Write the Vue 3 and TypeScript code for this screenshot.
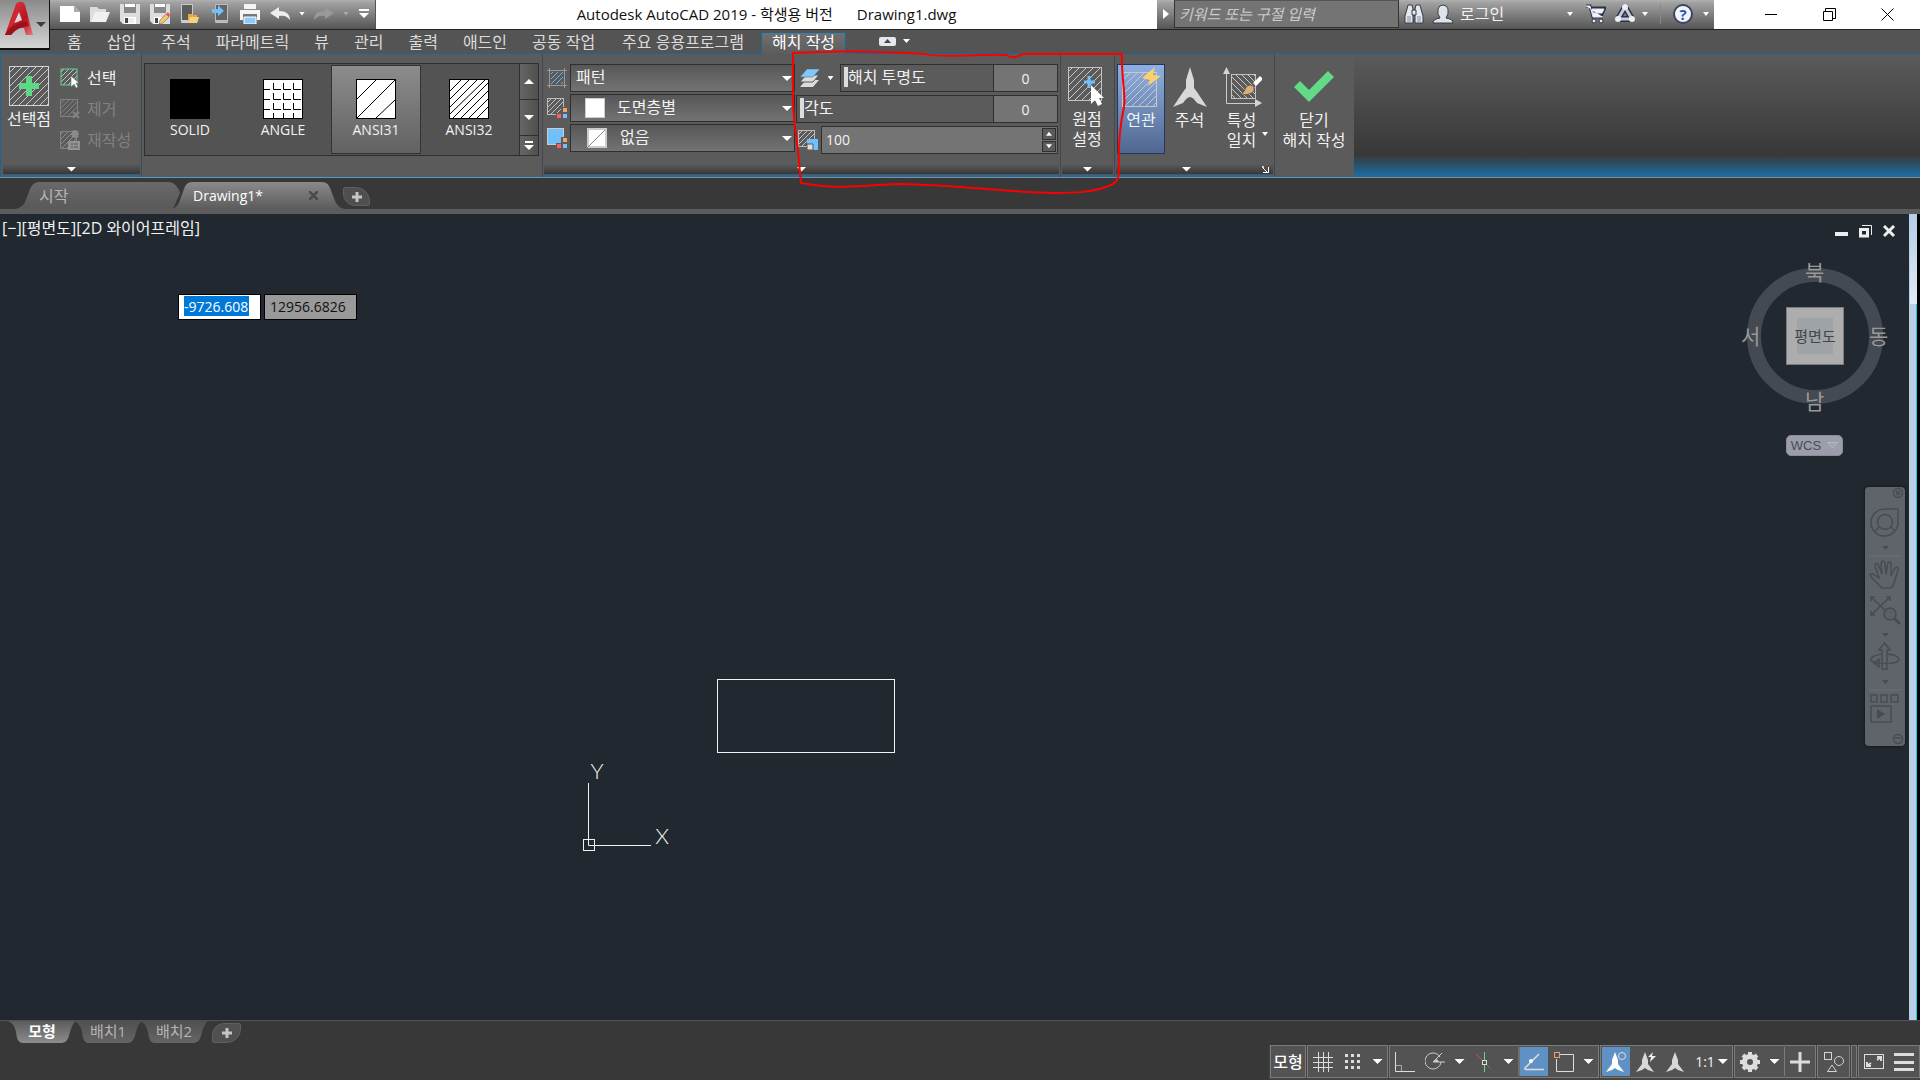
<script setup lang="ts">
import { ref } from 'vue'

interface Pattern {
  name: string
  kind: 'solid' | 'angle' | 'ansi31' | 'ansi32'
}

const menus: string[] = ['홈', '삽입', '주석', '파라메트릭', '뷰', '관리', '출력', '애드인', '공동 작업', '주요 응용프로그램']
const patterns: Pattern[] = [
  { name: 'SOLID', kind: 'solid' },
  { name: 'ANGLE', kind: 'angle' },
  { name: 'ANSI31', kind: 'ansi31' },
  { name: 'ANSI32', kind: 'ansi32' },
]
const selectedPattern = ref<string>('ANSI31')
const transparency = ref<string>('0')
const angle = ref<string>('0')
const scale = ref<string>('100')
const cursorX = ref<string>('-9726.608')
const cursorY = ref<string>('12956.6826')
const layouts: string[] = ['모형', '배치1', '배치2']
const activeLayout = ref<string>('모형')
</script>

<template>
  <div class="app">
    <svg class="defs" width="0" height="0" aria-hidden="true">
      <defs>
        <pattern id="hatch" width="7" height="7" patternUnits="userSpaceOnUse">
          <path d="M-1 8L8 -1M-1 1L1 -1M6 8L8 6" stroke="#c8c8c8" stroke-width="1" />
        </pattern>
        <pattern id="hatchSmall" width="5" height="5" patternUnits="userSpaceOnUse">
          <path d="M-1 6L6 -1M-1 1L1 -1M4 6L6 4" stroke="#c4c4c4" stroke-width="1" />
        </pattern>
        <pattern id="hatchBlue" width="5" height="5" patternUnits="userSpaceOnUse">
          <path d="M-1 6L6 -1M-1 1L1 -1M4 6L6 4" stroke="#6fb4e8" stroke-width="1" />
        </pattern>
        <pattern id="hatchBack" width="6" height="6" patternUnits="userSpaceOnUse">
          <path d="M-1 -1L7 7M-1 5L1 7M5 -1L7 1" stroke="#c8c8c8" stroke-width="1" />
        </pattern>
        <linearGradient id="logoRed" x1="0" y1="0" x2="1" y2="1">
          <stop offset="0" stop-color="#e0444a" />
          <stop offset="0.6" stop-color="#b81420" />
          <stop offset="1" stop-color="#e8767a" />
        </linearGradient>
      </defs>
    </svg>

    <header class="head">
      <button class="app-button" aria-label="응용프로그램 메뉴">
        <svg width="48" height="46" viewBox="0 0 48 46">
          <path d="M5 34L16 3Q17 1 19 1H22Q24 1 25 4L33 34H26L24 27H14L11 34Z" fill="url(#logoRed)" />
          <path d="M14 22L19 11L22 19Q18 21 14 22Z" fill="#d9d9d9" />
          <path d="M5 34Q9 24 27 20L29 25Q17 26 11 34Z" fill="#9c111b" />
          <path d="M16 3Q15 14 7 29L14 22L19 10Z" fill="#cf2a31" />
          <path d="M36 21H46L41 26Z" fill="#3b3f48" />
        </svg>
      </button>

      <div class="title-bar">
        <div class="quick">
          <button aria-label="새로 만들기"><svg width="20" height="20" viewBox="0 0 20 20"><path d="M0 2H14L20 8V18H0Z" fill="#fff" /><path d="M14 2V8H20Z" fill="#aaa" /></svg></button>
          <button aria-label="열기"><svg width="20" height="20" viewBox="0 0 20 20"><path d="M0 18V3H7L9 5H16V8H6L2 18Z" fill="#ddd" /><path d="M5 8H20L16 18H1Z" fill="#f1f1f1" /></svg></button>
          <button aria-label="저장"><svg width="20" height="20" viewBox="0 0 20 20"><path d="M0 0H20V20H3L0 17Z" fill="#ddd" /><path d="M4 0H16V9H4Z" fill="#888" /><path d="M5 0H15V3H5ZM4 13H16V20H4Z" fill="#fff" /><path d="M5 14H12V19H5Z" fill="#444" /><path d="M8 14H14V19H8Z" fill="#eee" /></svg></button>
          <button aria-label="다른 이름으로 저장"><svg width="20" height="20" viewBox="0 0 20 20"><path d="M0 0H20V20H3L0 17Z" fill="#ddd" /><path d="M4 0H16V9H4Z" fill="#888" /><path d="M5 0H15V3H5ZM4 13H12V20H4Z" fill="#fff" /><path d="M5 14H8V19H5Z" fill="#444" /><path d="M9 20L10 16L16 10L19 13L13 19Z" fill="#f5c56b" stroke="#555" stroke-width=".5" /><path d="M16 10L18 8L20 11L19 13Z" fill="#e8564d" /></svg></button>
          <button aria-label="모바일에서 열기"><svg width="20" height="20" viewBox="0 0 20 20"><rect x="1" y="0" width="12" height="19" rx="1" fill="#ccc" /><rect x="2" y="1" width="10" height="15" fill="#5c5c5c" /><path d="M8 19V10H12L13 11H17V13L19 13L17 19Z" fill="#e0a94a" /><path d="M10 13H19L17 19H8Z" fill="#f8cf7c" /></svg></button>
          <button aria-label="모바일에 저장"><svg width="20" height="20" viewBox="0 0 20 20"><rect x="5" y="0" width="13" height="19" rx="1" fill="#bbb" /><rect x="6" y="1" width="11" height="15" fill="#646464" /><path d="M2 5H8V1L14 7L8 12V9H2Z" fill="#6fc0fb" /></svg></button>
          <button aria-label="플롯"><svg width="20" height="20" viewBox="0 0 20 20"><path d="M4 0H16V5H4ZM0 6H20V16H0Z" fill="#f5f5f5" /><path d="M3 10H17V16H3Z" fill="#777" /><path d="M4 13H16V20H4Z" fill="#8ecbfb" stroke="#fff" /></svg></button>
          <button aria-label="명령 취소"><svg width="20" height="20" viewBox="0 0 20 20"><path d="M0 9L9 3V7C16 7 20 10 20 16C17 12 14 11 9 12V15Z" fill="#eee" /></svg></button>
          <button class="slim" aria-label="명령 취소 목록"><i class="tri"></i></button>
          <button aria-label="명령 복구"><svg width="20" height="20" viewBox="0 0 20 20"><path d="M20 9L11 3V7C4 7 0 10 0 16C3 12 6 11 11 12V15Z" fill="#999" /></svg></button>
          <button class="slim" aria-label="명령 복구 목록"><i class="tri dim"></i></button>
          <button class="more" aria-label="사용자화"><svg width="10" height="10" viewBox="0 0 10 10"><path d="M0 0H10V2H0ZM0 4H10L5 9Z" fill="#fff" /></svg></button>
        </div>

        <div class="caption"><span>Autodesk AutoCAD 2019 - 학생용 버전</span><span>Drawing1.dwg</span></div>

        <div class="info">
          <button class="info-toggle" aria-label="정보센터 축소"><svg width="6" height="10" viewBox="0 0 6 10"><path d="M0 0L6 5L0 10Z" fill="#fff" /></svg></button>
          <input class="search" type="text" placeholder="키워드 또는 구절 입력" aria-label="검색" />
          <button aria-label="찾기"><svg width="20" height="20" viewBox="0 0 20 20"><g fill="#e4e8ef" stroke="#343a48"><path d="M4 1H8L9 5V19H1V12L3 5Z" /><path d="M16 1H12L11 5V19H19V12L17 5Z" /><path d="M8 6H12V11H8Z" /></g><path d="M3 12H7V18H3ZM13 12H17V18H13Z" fill="#b3bbc8" /></svg></button>
          <button class="login"><svg width="22" height="20" viewBox="0 0 22 20"><path d="M1 19Q1 15 8 14Q5 10 6 5Q7 1 11 1Q15 1 16 5Q17 10 14 14Q21 15 21 19Z" fill="#dfe4ec" stroke="#343a48" /></svg><span>로그인</span><i class="tri"></i></button>
          <button aria-label="앱 스토어"><svg width="20" height="20" viewBox="0 0 20 20"><path d="M0 2H4L7 13H17M5 4H19L16 10H7" fill="#e3e7ef" stroke="#29324a" stroke-width="3" /><path d="M0 2H4L7 13H17M6 5H18L16 9H7Z" fill="#f0f3f8" stroke="#e3e7ef" /><circle cx="8" cy="17" r="2" fill="#eee" stroke="#29324a" /><circle cx="15" cy="17" r="2" fill="#eee" stroke="#29324a" /></svg></button>
          <button class="connect" aria-label="연결 유지"><svg width="20" height="20" viewBox="0 0 20 20"><path d="M10 3L17 15H3Z" fill="none" stroke="#29324a" stroke-width="6" stroke-linejoin="round" /><path d="M10 3L17 15H3Z" fill="none" stroke="#c6ccdc" stroke-width="3" /><g fill="#eef0f6"><circle cx="10" cy="3" r="3" /><circle cx="3" cy="15" r="3" /><circle cx="17" cy="15" r="3" /></g></svg><i class="tri"></i></button>
          <button class="help" aria-label="도움말"><span class="help-mark">?</span><i class="tri"></i></button>
        </div>

        <div class="window-controls">
          <button aria-label="최소화"><svg width="13" height="13" viewBox="0 0 13 13"><path d="M0 6.500H12" stroke="#000" /></svg></button>
          <button aria-label="이전 크기로"><svg width="13" height="13" viewBox="0 0 13 13"><path d="M.5 3.500H9.500V12.500H.5ZM2.500 3V.5H12.500V10.500H10" fill="none" stroke="#000" /></svg></button>
          <button aria-label="닫기"><svg width="13" height="13" viewBox="0 0 13 13"><path d="M.5 .5L12.500 12.500M12.500 .5L.5 12.500" stroke="#000" /></svg></button>
        </div>
      </div>

      <nav class="menu">
        <a v-for="m in menus" :key="m" href="#">{{ m }}</a>
        <a href="#" class="current">해치 작성</a>
        <button class="ribbon-toggle" aria-label="리본 최소화"><svg width="32" height="10" viewBox="0 0 32 10"><rect width="17" height="9" rx="2" fill="#e4e7ee" /><path d="M5 6H12L8.500 2Z" fill="#444" /><path d="M24 2H31L27.500 6Z" fill="#fff" /></svg></button>
      </nav>
    </header>

    <section class="ribbon">
      <div class="panel bounds">
        <div class="body">
          <button class="big">
            <svg width="40" height="40" viewBox="0 0 40 40"><rect x=".5" y=".5" width="39" height="39" fill="url(#hatch)" stroke="#d4d4d4" /><path d="M17 10H23V17H30V23H23V30H17V23H10V17H17Z" fill="#5fd886" /></svg>
            <span>선택점</span>
          </button>
          <div class="small-list">
            <button><svg width="20" height="20" viewBox="0 0 20 20"><rect x="1" y="1" width="16" height="16" fill="url(#hatchSmall)" stroke="#5fd886" /><path d="M11 8L19 15H16L18 19L16 20L14 16L11 19Z" fill="#fff" stroke="#5b5b5b" stroke-width=".5" /></svg>선택</button>
            <button disabled><svg width="20" height="20" viewBox="0 0 20 20" opacity=".35"><rect x=".5" y=".5" width="17" height="17" fill="url(#hatchSmall)" stroke="#ccc" /><path d="M13 13L19 19M19 13L13 19" stroke="#ccc" stroke-width="2" /></svg>제거</button>
            <button disabled><svg width="20" height="20" viewBox="0 0 20 20" opacity=".5"><rect x=".5" y="1.500" width="16" height="17" fill="url(#hatchSmall)" stroke="#aaa" /><path d="M15 0V8M11 4H19M12 1L18 7M18 1L12 7" stroke="#bbb" stroke-width="2" /><rect x="8" y="11" width="12" height="9" fill="#ccc" /><path d="M11 14H13M14 14H18M11 17H13M14 17H18" stroke="#555" /></svg>재작성</button>
          </div>
        </div>
        <button class="strip" aria-label="경계 패널 확장"><i class="tri wide"></i></button>
      </div>

      <div class="panel pattern-panel">
        <div class="gallery">
          <button v-for="p in patterns" :key="p.name" class="swatch-button" :class="{ selected: p.name === selectedPattern }" @click="selectedPattern = p.name">
            <svg width="40" height="40" viewBox="0 0 40 40">
              <rect x=".5" y=".5" width="39" height="39" :fill="p.kind === 'solid' ? '#000' : '#fff'" stroke="#000" />
              <path v-if="p.kind === 'angle'" d="M10.500 4V10.500H18M20.500 4V10.500H28M30.500 4V10.500H38M1 10.500H7M10.500 14V20.500H18M20.500 14V20.500H28M30.500 14V20.500H38M1 20.500H7M10.500 24V30.500H18M20.500 24V30.500H28M30.500 24V30.500H38M1 30.500H7M10.500 34V39M20.500 34V39M30.500 34V39" fill="none" stroke="#000" />
              <path v-if="p.kind === 'ansi31'" d="M1 20L20 1M1 39L39 1M20 39L39 21" stroke="#000" />
              <path v-if="p.kind === 'ansi32'" d="M1 12L12 1M1 20L20 1M1 28L28 1M1 35L36 1M4 39L39 4M12 39L39 12M20 39L39 20M28 39L39 28" stroke="#000" />
            </svg>
            <span>{{ p.name }}</span>
          </button>
          <div class="gallery-scroll">
            <button aria-label="위로"><i class="tri wide up"></i></button>
            <button aria-label="아래로"><i class="tri wide"></i></button>
            <button class="last" aria-label="모두 표시"><svg width="10" height="9" viewBox="0 0 10 9"><path d="M1 0H9V2H1ZM0 4H10L5 9Z" fill="#fff" /></svg></button>
          </div>
        </div>
      </div>

      <div class="panel properties">
        <div class="body">
          <div class="col-a">
            <div class="field">
              <svg width="20" height="20" viewBox="0 0 20 20"><path d="M2.500 0V20M17.500 0V20M0 2.500H20M0 17.500H20" stroke="#999" /><rect x="4" y="4" width="12" height="12" fill="url(#hatchBlue)" /></svg>
              <div class="combo"><select aria-label="해치 유형"><option>패턴</option></select></div>
            </div>
            <div class="field">
              <svg width="20" height="20" viewBox="0 0 20 20"><rect x=".5" y=".5" width="16" height="16" fill="url(#hatchSmall)" stroke="#bbb" /><path d="M14 9H20V20H9V15H14Z" fill="#5b5b5b" /><path d="M16 10H20V14H16Z" fill="#f4a26c" /><path d="M10 16H14V20H10Z" fill="#fb5f5f" /><path d="M16 16H20V20H16Z" fill="#6fc0fb" /></svg>
              <div class="combo swatch"><i class="chip"></i><select aria-label="해치 색상"><option>도면층별</option></select></div>
            </div>
            <div class="field">
              <svg width="20" height="20" viewBox="0 0 20 20"><rect x=".5" y=".5" width="16" height="16" fill="#6fc0fb" stroke="#ccc" /><path d="M14 9H20V20H9V15H14Z" fill="#5b5b5b" /><path d="M16 10H20V14H16Z" fill="#f4a26c" /><path d="M10 16H14V20H10Z" fill="#fb5f5f" /><path d="M16 16H20V20H16Z" fill="#6fc0fb" /></svg>
              <div class="combo swatch none"><svg class="chip" width="20" height="20" viewBox="0 0 20 20"><rect x="1" y="1" width="18" height="18" fill="#fff" stroke="#ccc" stroke-width="2" /><path d="M0 20L18 2" stroke="#888" /></svg><select aria-label="배경색"><option>없음</option></select></div>
            </div>
          </div>
          <div class="col-b">
            <div class="field">
              <button class="layer" aria-label="투명도 유형"><svg width="20" height="20" viewBox="0 0 20 20"><path d="M0 19L6 12H19L13 19Z" fill="#ddd" /><path d="M0 14L6 7H19L13 14Z" fill="#ddd" stroke="#5b5b5b" /><path d="M0 9L7 1H20L13 9Z" fill="#82c7fb" stroke="#5b5b5b" stroke-width=".5" /></svg><i class="tri"></i></button>
              <div class="slider"><input id="transparency" v-model="transparency" type="range" min="0" max="90" /><label for="transparency">해치 투명도</label></div>
              <input v-model="transparency" class="value" type="text" aria-label="투명도 값" />
            </div>
            <div class="field">
              <div class="slider"><input id="angle" v-model="angle" type="range" min="0" max="359" /><label for="angle">각도</label></div>
              <input v-model="angle" class="value" type="text" aria-label="각도 값" />
            </div>
            <div class="field scale">
              <svg width="20" height="20" viewBox="0 0 20 20"><rect x=".5" y=".5" width="16" height="16" fill="url(#hatchSmall)" stroke="#bbb" /><path d="M9 9H20V20H9Z" fill="#6fc0fb" /><path d="M9 14H15V20H9Z" fill="#ddd" stroke="#5b5b5b" /></svg>
              <div class="spin">
                <input v-model="scale" type="text" aria-label="해치 축척" />
                <div class="spin-buttons"><button aria-label="증가"><i class="tri up"></i></button><button aria-label="감소"><i class="tri"></i></button></div>
              </div>
            </div>
          </div>
        </div>
        <button class="strip" aria-label="특성 패널 확장"><i class="tri wide"></i></button>
      </div>

      <div class="panel origin">
        <div class="body">
          <button class="big">
            <svg width="40" height="40" viewBox="0 0 40 40"><rect x="1.500" y="1.500" width="33" height="33" fill="url(#hatch)" stroke="#c4c4c4" /><path d="M22 10V22M17 16H28" stroke="#6fc0fb" stroke-width="3" /><path d="M24 19V38L28 34L31 40L35 38L32 32H37Z" fill="#fff" /></svg>
            <span>원점<br />설정</span>
          </button>
        </div>
        <button class="strip" aria-label="원점 패널 확장"><i class="tri wide"></i></button>
      </div>

      <div class="panel options">
        <div class="body">
          <button class="big toggled">
            <svg width="40" height="40" viewBox="0 0 40 40"><rect x=".5" y="5.500" width="34" height="34" fill="url(#hatch)" stroke="#c8c8c8" /><path d="M33 0L20 11L28 13L26 19L39 9L31 8Z" fill="#fcd06e" /></svg>
            <span>연관</span>
          </button>
          <button class="big annotate">
            <svg width="36" height="40" viewBox="0 0 36 40"><path d="M18 0L22 13V21L25 25L35 40L25 36Q21 30 18 30Q15 30 11 36L1 40L11 25L14 21V13Z" fill="#d8d8d8" /></svg>
            <span>주석</span>
          </button>
          <button class="big match">
            <svg width="40" height="40" viewBox="0 0 40 40"><path d="M4.500 4V36.500H36" fill="none" stroke="#ccc" /><path d="M4.500 0L8 7H1ZM40 36L33 32V40Z" fill="#d4d4d4" /><rect x="9.500" y="7.500" width="24" height="24" fill="url(#hatchBack)" stroke="#c4c4c4" /><path d="M19 28Q23 24 24 20Q28 16 32 20Q34 28 19 28Z" fill="#e0ad73" stroke="#5b5b5b" /><path d="M31 16L38 9L41 12L34 19Z" fill="#fff" /></svg>
            <span>특성<br />일치</span><i class="tri match-arrow"></i>
          </button>
        </div>
        <button class="strip" aria-label="옵션 패널 확장"><i class="tri wide"></i><svg class="launcher" width="7" height="7" viewBox="0 0 7 7"><path d="M0 1H2M1 0V2L5 6M6.500 1V6.500H1" fill="none" stroke="#fff" /></svg></button>
      </div>

      <div class="panel close-panel">
        <div class="body">
          <button class="big">
            <svg width="40" height="40" viewBox="0 0 40 40"><path d="M0 20L6 14L15 23L34 4L40 10L15 35Z" fill="#62da86" /></svg>
            <span>닫기<br />해치 작성</span>
          </button>
        </div>
      </div>
      <div class="ribbon-rest"></div>
    </section>

    <nav class="files">
      <button class="file start">시작</button>
      <button class="file active">Drawing1*<svg width="9" height="9" viewBox="0 0 9 9"><path d="M0 0L9 9M9 0L0 9" stroke="#4a4a4a" stroke-width="2.500" /></svg></button>
      <button class="add" aria-label="새 도면"><svg width="10" height="10" viewBox="0 0 10 10"><path d="M5 0V10M0 5H10" stroke="#c4c4c4" stroke-width="3" /></svg></button>
    </nav>

    <main class="stage">
      <div class="canvas">
        <div class="view-label">[−][평면도][2D 와이어프레임]</div>
        <svg class="drawing" width="960" height="700" viewBox="0 0 960 700" fill="none" stroke="#f2f2f2">
          <rect x="717.500" y="465.500" width="177" height="73" />
          <path d="M588.500 569V631.500H651" />
          <rect x="583.500" y="625.500" width="11" height="11" />
          <g class="axis" text-anchor="middle" stroke="none" fill="#f2f2f2"><text x="597" y="565">Y</text><text x="662" y="630">X</text></g>
        </svg>
        <div class="coords">
          <input v-model="cursorX" class="coord-x" type="text" aria-label="X 좌표" />
          <input v-model="cursorY" class="coord-y" type="text" aria-label="Y 좌표" />
        </div>
        <div class="doc-controls">
          <button aria-label="도면 최소화"><svg width="13" height="13" viewBox="0 0 13 13"><path d="M0 7H13V11H0Z" fill="#eee" /></svg></button>
          <button aria-label="도면 이전 크기로"><svg width="13" height="13" viewBox="0 0 13 13"><path d="M1.500 4.500H8.500V11H1.500Z" fill="none" stroke="#eee" stroke-width="3" /><path d="M3 .5H12.500V10" fill="none" stroke="#eee" /></svg></button>
          <button aria-label="도면 닫기"><svg width="13" height="13" viewBox="0 0 13 13"><path d="M1 1L11 11M11 1L1 11" stroke="#eee" stroke-width="3" /></svg></button>
        </div>
        <div class="cube">
          <div class="ring"></div>
          <span class="n">북</span><span class="w">서</span><span class="e">동</span><span class="s">남</span>
          <button class="face">평면도</button>
        </div>
        <button class="wcs">WCS<svg width="11" height="7" viewBox="0 0 11 7"><path d="M.5 .5H10.500L5.500 6Z" fill="#a3a4b2" stroke="#b6b7c4" /></svg></button>
        <div class="navbar">
          <svg width="40" height="259" viewBox="0 0 40 259" fill="none" stroke="#474c52" stroke-width="1.500">
            <circle cx="33" cy="6" r="4.500" /><path d="M31 4L35 8M35 4L31 8" />
            <path d="M20 22H33V36A13.500 13.500 0 1 1 20 22Z" /><circle cx="20" cy="35" r="7.500" /><path d="M10 44L14 40M30 44L26 40" />
            <path d="M4 69H37M4 203H37" stroke="#6c7177" stroke-width="1" />
            <path d="M17 59H24L20.500 63ZM17 146H24L20.500 150ZM17 193H24L20.500 197Z" fill="#474c52" stroke="none" />
            <path d="M17 101Q12 96 6 90Q4 86 8 87L14 91L10 79Q10 75 13 77L17 87L16 76Q18 72 20 76L21 87L23 76Q26 73 26 78L26 89L30 81Q34 79 33 83L29 96Q28 101 25 101Z" />
            <path d="M6 110L25 128M25 110L6 128M6 114V110H10M21 110H25V114M6 124V128H10" /><circle cx="25" cy="127" r="6" fill="#5b6066" /><path d="M29 131L35 137" stroke-width="3" />
            <path d="M14 163L19.500 156L25 163H22V182H17V163ZM17 167Q5 169 6 173Q8 176 14 176M22 167Q34 168 34 173Q30 178 14 176M9 176L14 172V180Z" />
            <path d="M6 208H12V215H6ZM16 208H22V215H16ZM26 208H33V215H26ZM6 219H26V235H6Z" /><path d="M12 222L20 227L12 232Z" fill="#474c52" stroke="none" />
            <circle cx="33" cy="252" r="4.500" /><path d="M30 251H36" />
          </svg>
        </div>
      </div>
      <div class="edge"></div>
    </main>

    <footer class="bottom">
      <nav class="layouts">
        <button v-for="l in layouts" :key="l" :class="{ active: l === activeLayout }" @click="activeLayout = l">{{ l }}</button>
        <button class="add" aria-label="새 배치"><svg width="10" height="10" viewBox="0 0 10 10"><path d="M5 0V10M0 5H10" stroke="#c4c4c4" stroke-width="3" /></svg></button>
      </nav>
      <div class="status">
        <div class="group"><button class="model">모형</button></div>
        <div class="group">
          <button class="cell" aria-label="그리드"><svg width="20" height="20" viewBox="0 0 20 20"><path d="M5.500 0V20M10.500 0V20M15.500 0V20M0 5.500H20M0 10.500H20M0 15.500H20" stroke="#ddd" /></svg></button>
          <button class="cell" aria-label="스냅"><svg width="16" height="16" viewBox="0 0 16 16"><path d="M0 1.500H3M6 1.500H9M12 1.500H15M0 7.500H3M6 7.500H9M12 7.500H15M0 13.500H3M6 13.500H9M12 13.500H15" stroke="#ddd" stroke-width="3" /></svg></button>
          <button class="drop" aria-label="스냅 설정"><i class="tri wide"></i></button>
        </div>
        <div class="group">
          <button class="cell" aria-label="직교"><svg width="20" height="20" viewBox="0 0 20 20"><path d="M.5 0V19.500H20" fill="none" stroke="#ddd" /><path d="M1 13.500H6.500V19" fill="none" stroke="#aaa" /></svg></button>
          <button class="cell" aria-label="극좌표"><svg width="20" height="20" viewBox="0 0 20 20"><path d="M15 5A8 8 0 1 0 16 10M8 10H20M8 10L17 1" fill="none" stroke="#d0d0d0" /><path d="M12 7L8 10H14Z" fill="#ccc" /></svg></button>
          <button class="drop" aria-label="극좌표 설정"><i class="tri wide"></i></button>
          <button class="cell" aria-label="등각투영"><svg width="20" height="20" viewBox="0 0 20 20"><path d="M2 2L17 17" stroke="#b5595c" /><path d="M10.500 0V20" stroke="#5fd886" /><rect x="8.500" y="8.500" width="4" height="4" fill="#535353" stroke="#ddd" /></svg></button>
          <button class="drop" aria-label="등각투영 설정"><i class="tri wide"></i></button>
          <button class="cell on split" aria-label="객체 스냅 추적"><svg width="20" height="20" viewBox="0 0 20 20"><path d="M1 17.500H20M0 17L15 2" stroke="#ddd" stroke-width="1.500" /><circle cx="7" cy="9" r="2" fill="#fff" /></svg></button>
          <button class="cell" aria-label="객체 스냅"><svg width="20" height="20" viewBox="0 0 20 20"><path d="M6 2.500H19.500V19.500H2.500V7" fill="none" stroke="#ddd" /><rect x=".5" y=".5" width="5" height="5" fill="none" stroke="#e8a06c" /></svg></button>
          <button class="drop" aria-label="객체 스냅 설정"><i class="tri wide"></i></button>
        </div>
        <div class="group">
          <button class="cell on" aria-label="주석 가시성"><svg width="20" height="20" viewBox="0 0 20 20"><path d="M9 0L12 8V12L18 20L12 18L9 16L6 18L0 20L6 12V8Z" fill="#fff" /><circle cx="16" cy="4" r="3.500" fill="none" stroke="#ddd" /></svg></button>
          <button class="cell" aria-label="자동 축척"><svg width="20" height="20" viewBox="0 0 20 20"><path d="M9 0L12 8V12L18 20L12 18L9 16L6 18L0 20L6 12V8Z" fill="#d8d8d8" /><path d="M17 0L12 5H15L14 10L20 4H16Z" fill="#eee" /></svg></button>
          <button class="cell" aria-label="주석 축척"><svg width="20" height="20" viewBox="0 0 20 20"><path d="M9 0L12 8V12L18 20L12 18L9 16L6 18L0 20L6 12V8Z" fill="#d8d8d8" /></svg></button>
          <button class="ratio">1:1<i class="tri wide"></i></button>
        </div>
        <div class="group">
          <button class="cell" aria-label="작업공간"><svg width="20" height="20" viewBox="0 0 20 20"><circle cx="10" cy="10" r="5.500" fill="none" stroke="#ddd" stroke-width="5" /><path d="M10 0V4M10 16V20M0 10H4M16 10H20M3 3L6 6M14 14L17 17M17 3L14 6M3 17L6 14" stroke="#ddd" stroke-width="4" /></svg></button>
          <button class="drop" aria-label="작업공간 목록"><i class="tri wide"></i></button>
          <button class="cell split" aria-label="추가"><svg width="20" height="20" viewBox="0 0 20 20"><path d="M10 0V20M0 10H20" stroke="#ddd" stroke-width="3" /></svg></button>
        </div>
        <div class="group isolate"><button class="cell" aria-label="객체 분리"><svg width="20" height="20" viewBox="0 0 20 20" fill="none" stroke="#d4d4d4"><rect x=".5" y=".5" width="7" height="7" /><circle cx="15" cy="9" r="4.500" /><path d="M8 13L12.500 19.500H3.500Z" /></svg></button></div>
        <div class="group"><span class="gap"></span></div>
        <div class="group">
          <button class="cell" aria-label="전체 화면"><svg width="20" height="16" viewBox="0 0 20 16"><rect x=".5" y=".5" width="19" height="14" fill="none" stroke="#ddd" /><path d="M13 3H17V7M17 3L13 6M7 12H3V8M3 12L7 9" fill="none" stroke="#ddd" stroke-width="2" /></svg></button>
          <button class="cell" aria-label="사용자화"><svg width="20" height="18" viewBox="0 0 20 18"><path d="M0 1.500H20M0 9.500H20M0 16.500H20" stroke="#ddd" stroke-width="3" /></svg></button>
        </div>
      </div>
    </footer>

    <svg class="markup" width="1160" height="200" viewBox="0 0 1160 200" aria-hidden="true">
      <path d="M793 53C840 50 880 52 926 54C932 58 990 54 1006 55Q1012 59 1018 56L1023 54H1122C1121 75 1126 95 1124 107C1120 125 1118 145 1119 170Q1119 181 1113 184C1095 193 1070 193 1055 193C1000 192 950 184 896 184C870 185 835 190 801 183C799 165 799 155 796 135C792 110 793 90 793 53Z" fill="none" stroke="#fb0000" stroke-width="2" />
    </svg>
  </div>
</template>

<style>
body {
  margin: 0;
  background: #383838;
}
</style>

<style scoped>
.app {
  position: relative;
  display: flex;
  flex-direction: column;
  min-height: 100vh;
  font-family: "Open Sans", "Noto Sans CJK KR", sans-serif;
  font-size: 16px;
  line-height: 20px;
  color: #f2f2f2;
  background: #383838;
  overflow: hidden;
}
.app *, .app *::before, .app *::after { box-sizing: border-box; }
.defs { position: absolute; }
svg { display: block; flex: none; }
button, input, select {
  margin: 0;
  padding: 0;
  border: 0;
  border-radius: 0;
  background: none;
  color: inherit;
  font: inherit;
  outline: none;
}
button {
  display: flex;
  align-items: center;
  justify-content: center;
  white-space: nowrap;
}
a { color: inherit; text-decoration: none; }
.tri {
  flex: none;
  width: 6px;
  height: 4px;
  background: #fff;
  clip-path: polygon(0 0, 100% 0, 50% 100%);
}
.tri.wide { width: 10px; height: 5px; }
.tri.up { clip-path: polygon(50% 0, 100% 100%, 0 100%); }
.tri.dim { background: #aaa; }

/* header */
.head {
  display: grid;
  grid-template-columns: 50px 1fr;
  grid-template-rows: 30px 24px;
  background: #545454;
  border-bottom: 1px solid #1b6696;
  height: 54px;
}
.app-button {
  grid-row: 1 / 3;
  height: 50px;
  align-items: flex-start;
  background: linear-gradient(#8a8a8a, #d5d5d5);
  border: solid #111;
  border-width: 0 1px 2px 0;
  justify-content: flex-start;
  padding-top: 1px;
}
.title-bar {
  display: flex;
  border-bottom: 1px solid #222;
  background: #fff;
}
.quick, .info {
  display: flex;
  background: linear-gradient(#b0b0b0 0, #a0a0a0 3px, #555 100%);
}
.quick { padding: 0 0 2px 5px; border-right: 1px solid #555; }
.quick button { width: 30px; }
.quick .slim { width: 14px; }
.quick .more { width: 22px; }
.caption {
  flex: 1;
  display: flex;
  align-items: center;
  justify-content: center;
  gap: 24px;
  font-size: 15px;
  color: #111;
  padding-bottom: 2px;
  white-space: nowrap;
}
.info { width: 557px; padding-bottom: 1px; }
.info button { width: 30px; }
.info .info-toggle { width: 17px; }
.search {
  width: 225px;
  height: 28px;
  padding: 0 4px;
  background: #747474;
  border: 1px solid #333;
  border-top-color: #555;
  font-size: 15px;
  font-style: italic;
}
.search::placeholder { color: #ccc; opacity: 1; }
.info .login { flex: 1; gap: 6px; padding-left: 3px; font-size: 16px; }
.login .tri { margin-left: auto; margin-right: 8px; width: 6px; }
.info .connect { width: 49px; gap: 7px; padding-left: 4px; justify-content: flex-start; }
.info .help { width: 54px; gap: 10px; border-left: 1px solid #888; margin: 4px 0; padding-left: 12px; justify-content: flex-start; }
.help-mark {
  width: 20px;
  height: 20px;
  border: 2px solid #39455f;
  border-radius: 50%;
  background: #f2f4f8;
  color: #2456c0;
  font-weight: 700;
  font-size: 15px;
  line-height: 16px;
}
.window-controls { display: flex; width: 206px; padding-left: 28px; }
.window-controls button { width: 58px; }
.menu { display: flex; align-items: center; padding-left: 17px; gap: 25px; color: #dcdcdc; white-space: nowrap; }
.menu a:nth-child(9), .menu a:nth-child(10) { padding-right: 2px; }
.menu .current {
  margin: 2px 0 0 -10px;
  padding: 0 10px;
  height: 22px;
  line-height: 18px;
  border: 1px solid #1b6696;
  border-bottom: 0;
  background: linear-gradient(#707070, #5c5c5c);
  color: #fff;
}
.ribbon-toggle { margin-left: 8px; }

/* ribbon */
.ribbon {
  display: flex;
  height: 124px;
  border-bottom: 1px solid #8a8a8a;
  background: #5b5b5b;
  box-shadow: inset 0 -1px #1b6fa6;
}
.panel {
  display: flex;
  flex-direction: column;
  padding-bottom: 2px;
  border-right: 1px solid #3a4a56;
}
.body { display: flex; flex: 1; }
.strip {
  position: relative;
  height: 11px;
  margin: 0 1px 0 2px;
  background: linear-gradient(#5b5b5b, #383838);
  border-bottom: 1px solid #1b6696;
}
.big {
  flex-direction: column;
  justify-content: flex-start;
  align-self: flex-start;
  position: relative;
}
.big span { margin-top: 3px; text-align: center; }
.bounds { width: 142px; border-left: 1px solid #1b6696; }
.bounds .body { padding-left: 3px; }
.bounds .big { width: 50px; margin-top: 12px; }
.small-list { padding: 8px 0 0 6px; }
.small-list button { height: 31px; gap: 7px; }
.small-list button:disabled { color: #828282; }
.pattern-panel { width: 401px; }
.gallery { display: flex; gap: 3px; margin: 9px 3px 0 2px; height: 93px; border: 1px solid #2f2f2f; background: #535353; }
.swatch-button {
  width: 90px;
  flex-direction: column;
  justify-content: flex-start;
  padding-top: 13px;
  margin: 1px 0;
  border: 1px solid transparent;
  font-size: 14px;
}
.swatch-button span { margin-top: 1px; }
.swatch-button.selected { border-color: #333; background: linear-gradient(#8c8c8c, #626262); }
.gallery-scroll { width: 19px; margin-left: auto; display: flex; flex-direction: column; border-left: 1px solid #2f2f2f; }
.gallery-scroll button { flex: 1; background: linear-gradient(90deg, #666, #505050); border-bottom: 1px solid #2f2f2f; }
.gallery-scroll .last { flex: 0 0 19px; border: 0; }
.properties { width: 518px; }
.properties .strip, .origin .strip, .options .strip { margin-left: 1px; }
.properties .body { padding: 10px 0 0 4px; gap: 1px; align-items: flex-start; }
.col-a, .col-b { display: flex; flex-direction: column; gap: 2px; }
.col-b { gap: 3px; width: 262px; }
.field { display: flex; align-items: center; gap: 3px; height: 28px; }
.col-b .field { gap: 0; }
.combo { position: relative; width: 225px; height: 28px; }
.combo select {
  width: 100%;
  height: 28px;
  padding: 0 20px 2px 5px;
  appearance: none;
  background: linear-gradient(#575757, #737373);
  border: 1px solid #2f2f2f;
}
.combo.swatch select { padding-left: 46px; }
.combo.none select { padding-left: 49px; }
.combo::after {
  content: "";
  position: absolute;
  right: 3px;
  top: 12px;
  width: 10px;
  height: 5px;
  background: #fff;
  clip-path: polygon(0 0, 100% 0, 50% 100%);
}
.chip { position: absolute; left: 15px; top: 4px; width: 20px; height: 20px; background: #fff; border: 1px solid #ccc; }
svg.chip { left: 17px; border: 0; background: none; }
.layer { width: 44px; gap: 8px; padding-right: 3px; }
.slider { position: relative; flex: 1; height: 28px; border: 1px solid #2f2f2f; background: #5b5b5b; }
.slider input { appearance: none; display: block; width: 100%; height: 24px; padding: 0 3px; }
.slider input::-webkit-slider-thumb { appearance: none; width: 4px; height: 20px; background: #ddd; }
.slider label { position: absolute; left: 7px; top: 2px; pointer-events: none; }
.value { width: 65px; height: 28px; margin-left: -1px; border: 1px solid #2f2f2f; background: #747474; text-align: center; font-size: 14px; }
.scale { padding-left: 2px; }
.spin { display: flex; flex: 1; margin-left: 3px; height: 28px; padding: 1px; border: 1px solid #2f2f2f; background: #747474; }
.spin input { flex: 1; min-width: 0; padding-left: 3px; font-size: 14px; }
.spin-buttons { display: flex; flex-direction: column; width: 14px; gap: 1px; }
.spin-buttons button { flex: 1; border: 1px solid #2f2f2f; background: #5b5b5b; }
.origin { width: 54px; }
.origin .big { width: 52px; margin-top: 12px; }
.options { width: 160px; }
.options .body { padding: 10px 0 0 2px; }
.options .big { width: 55px; height: 90px; padding-top: 3px; }
.options .big.toggled { width: 48px; border: 1px solid #26365e; padding-top: 2px; background: linear-gradient(#8fb0e2, #50678f); }
.toggled svg { margin-left: 1px; }
.options .annotate { width: 49px; }
.match-arrow { position: absolute; right: 1px; bottom: 18px; }
.options .strip { padding-right: 16px; }
.launcher { position: absolute; right: 4px; top: 2px; }
.close-panel { width: 79px; border: 0; }
.close-panel .big { width: 78px; margin-top: 13px; }
.ribbon-rest { flex: 1; background: linear-gradient(#5b5b5b, #383838 82%, #1b6fa6); }

/* drawing file tabs */
.files {
  display: flex;
  height: 36px;
  padding: 4px 0 0 15px;
  border-bottom: 5px solid #5c5c5c;
}
.file { height: 27px; justify-content: flex-start; padding: 0 0 0 24px; color: #b4b4b4; background: linear-gradient(#696969, #595959); }
.file.start { width: 166px; clip-path: path("M0 27Q8 26 11 18L15 7Q18 0 24 0H154Q162 1 165 11L158 27Z"); }
.file.active {
  width: 173px;
  margin-left: -9px;
  padding-left: 21px;
  color: #fff;
  font-size: 14px;
  background: linear-gradient(#8a8a8a, #5c5c5c);
  clip-path: path("M0 27Q6 25 8 18L12 7Q14 0 20 0H150Q156 0 158 6L163 19Q166 26 173 27Z");
}
.file.active svg { margin-left: auto; margin-right: 27px; }
.files .add { width: 27px; height: 19px; margin: 5px 0 0 -2px; border: 1px solid #5f5f5f; border-radius: 2px 14px 2px 12px; background: #4f4f4f; }

/* drawing area */
.stage { display: flex; flex: 1; min-height: 620px; }
.canvas { position: relative; flex: 1; background: #212830; overflow: hidden; }
.edge {
  width: 11px;
  border-right: 3px solid #000;
  background: linear-gradient(#b5cbe8, #e1eaf6) top / 7px 90px no-repeat, linear-gradient(90deg, #b9cfe8 7px, #18c8f0 7px);
}
.view-label { padding: 4px 0 0 2px; font-size: 16px; }
.drawing { position: absolute; left: 0; top: 0; }
.axis { font: 300 22px Lato, sans-serif; }
.coords { position: absolute; left: 178px; top: 80px; display: flex; gap: 3px; font-size: 14px; }
.coords input { height: 26px; border: 1px solid #000; padding: 0 5px 2px; }
.coords .coord-x { width: 83px; color: #fff; background: linear-gradient(#0078d7, #0078d7) 5px 1px / 65px 20px no-repeat #fff; }
.coords .coord-y { width: 93px; color: #111; background: #999; }
.doc-controls { position: absolute; right: 13px; top: 11px; display: flex; gap: 11px; }
.cube { position: absolute; right: 26px; top: 54px; width: 136px; height: 136px; color: #999; font-size: 21px; }
.ring { width: 136px; height: 136px; border: 14px solid #444a52; border-radius: 50%; }
.cube span { position: absolute; }
.cube .n { left: 58px; top: -6px; }
.cube .s { left: 58px; top: 123px; }
.cube .w { left: -6px; top: 58px; }
.cube .e { left: 122px; top: 58px; }
.cube .face { position: absolute; left: 39px; top: 39px; width: 58px; height: 58px; background: #9fa3a6; border: 11px solid #adadad; color: #3f464c; font-size: 15px; outline: 1px solid #7b7d80; outline-offset: -1px; }
.wcs { position: absolute; right: 66px; top: 221px; width: 57px; height: 21px; gap: 6px; border: 1px solid #8b8c98; border-radius: 5px; background: #9c9dab; color: #4a4b52; font: 13px "Liberation Sans", sans-serif; }
.navbar { position: absolute; right: 4px; top: 273px; width: 40px; height: 259px; border-radius: 4px; background: #5f646a; box-shadow: 0 0 3px #111; }

/* layout tabs and status bar */
.bottom { height: 60px; border-top: 1px solid #525252; display: flex; flex-direction: column; justify-content: space-between; }
.layouts { display: flex; padding-left: 8px; }
.layouts button {
  width: 68px;
  height: 22px;
  margin-right: -2px;
  padding: 0 0 2px;
  color: #b4b4b4;
  background: linear-gradient(#505050, #656565);
  clip-path: path("M0 0H68Q64 3 62 11Q60 22 54 22H14Q9 22 8 11Q6 2 0 0Z");
  font-size: 15px;
}
.layouts .active { color: #fff; font-weight: 700; background: linear-gradient(#5c5c5c, #8c8c8c); }
.layouts .add { width: 29px; height: 20px; margin: 2px 0 0 6px; padding: 0; clip-path: none; border-radius: 12px 2px 14px 2px; background: #505050; border: 1px solid #606060; }
.status { display: flex; align-self: flex-end; gap: 1px; height: 35px; padding: 0 0 2px 1px; background: #444; }
.group { display: flex; padding: 1px 0; border: 1px solid #7b7b7b; background: #535353; }
.isolate { padding: 1px 0 1px 1px; }
.model { width: 34px; color: #fff; font-weight: 500; }
.cell { width: 30px; }
.drop { width: 19px; }
.on { width: 28px; margin: 0 1px; background: #6091c4; }
.on.split { margin-left: 2px; box-shadow: -2px 0 #6f6f6f; }
.split { margin-left: 1px; box-shadow: -1px 0 #7b7b7b; }
.ratio { width: 41px; gap: 3px; font-size: 14px; }
.gap { width: 4px; }
.markup { position: absolute; left: 0; top: 0; pointer-events: none; }
</style>
